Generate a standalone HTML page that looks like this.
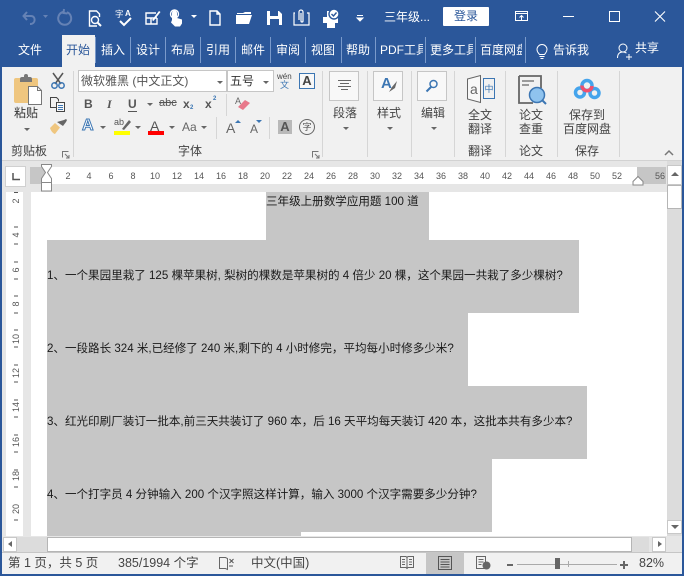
<!DOCTYPE html>
<html><head><meta charset="utf-8">
<style>
html,body{margin:0;padding:0}
body{width:684px;height:576px;overflow:hidden;position:relative;background:#e6e6e6;font-family:"Liberation Sans","Noto Sans CJK SC",sans-serif;font-size:12px;color:#333}
.a{position:absolute;white-space:nowrap;line-height:1}
.r{position:absolute}
svg{position:absolute;overflow:visible}
.tab{position:absolute;top:43px;color:#fff;font-size:12px;line-height:14px;white-space:nowrap;overflow:hidden;height:16px}
.sep{position:absolute;top:37px;height:26px;width:1px;background:#7a9acb}
.gs{position:absolute;top:71px;height:86px;width:1px;background:#d6d6d6}
.bx{position:absolute;top:71px;width:30px;height:30px;background:#f8f8f8;border:1px solid #c6c6c6;box-sizing:border-box}
.t{position:absolute;font-size:12px;line-height:14px;color:#444;white-space:nowrap;text-align:center}
.tri{position:absolute;width:0;height:0;border-left:3px solid transparent;border-right:3px solid transparent;border-top:3px solid #666}
.rn{position:absolute;top:171px;font-size:9px;line-height:10px;width:20px;text-align:center;color:#555}
.vn{position:absolute;left:11px;width:10px;font-size:9px;line-height:10px;color:#555;transform:rotate(-90deg);text-align:center}
.doc{position:absolute;font-size:11.55px;line-height:14px;color:#1a1a1a;white-space:nowrap}
.st{position:absolute;top:556px;font-size:12.5px;line-height:14px;color:#444;white-space:nowrap}
</style></head><body>
<!-- title bar -->
<div class="r" style="left:0;top:0;width:684px;height:67px;background:#2b579a"></div>

<svg style="left:0;top:0" width="342" height="34" fill="none" stroke="#fff" stroke-width="1.4">
<g stroke="#6582b5" stroke-width="2"><path d="M27 12l-3.500 4 3.500 4M24 16h7c5 0 5 8-1 8"/></g>
<path d="M43 15l2.500 3 2.500-3z" fill="#6582b5" stroke="none"/>
<g stroke="#6582b5" stroke-width="2"><path d="M63 12a6.500 6.500 0 1 0 4 .2M64 9l-.5 4 4 .5"/></g>
<path d="M97 26h-7.500v-15h7l3 3v3" />
<circle cx="95" cy="20" r="3.500"/><path d="M97.500 22.500l3.500 3.500" stroke-width="2"/>
<text x="115" y="17" font-size="8.500" fill="#fff" stroke="none" font-family="Liberation Sans,Noto Sans CJK SC,sans-serif">字</text>
<text x="125" y="16" font-size="8" fill="#fff" stroke="none" font-family="Liberation Sans,sans-serif" font-weight="bold">A</text>
<path d="M120 21l4 4 7-7" stroke-width="2"/>
<path d="M156 13h-10v11h11v-6M146 18h11M151 18v6" />
<path d="M152 20l7-9 1.500 1-7 9z" fill="#fff" stroke="none"/>
<path d="M172 20v-7a2.500 2.500 0 0 1 5 0v5l5 1.500v4l-2 3h-5l-4-4z" fill="#fff" stroke="none"/>
<circle cx="174.500" cy="14" r="4"/>
<path d="M191 15l3 3 3-3z" fill="#fff" stroke="none"/>
<path d="M210 11h7l3 3v11h-10zM217 11v3h3"/>
<path d="M236 15v9h13l3-9z" fill="#fff" stroke="none"/><path d="M237 13h6l2-1h6v2h-14z" fill="#fff" stroke="none"/>
<path d="M267 11h12l3 3v11h-15z" fill="#fff" stroke="none"/><rect x="270" y="11" width="8" height="5" fill="#2b579a" stroke="none"/><rect x="270" y="19" width="9" height="6" fill="#2b579a" stroke="none"/>
<path d="M295 13h-1v12h15v-12h-2" stroke-width="1.200"/><path d="M299 20v-8a2 2 0 0 1 4 0v9a1 1 0 0 1-2 0v-8" stroke-width="1.200"/>
<rect x="323" y="17" width="15" height="6" fill="#fff" stroke="none"/><rect x="327" y="23" width="8" height="5" fill="#fff" stroke="none"/><rect x="327" y="11" width="8" height="6" fill="#fff" stroke="none"/>
<circle cx="334" cy="14" r="5" fill="#fff" stroke="#2b579a"/><path d="M331.500 14l2 2 3-3.500" stroke="#2b579a"/>
</svg>
<svg style="left:342px;top:0" width="342" height="34" fill="none" stroke="#fff">
<path d="M15 15.500h6M15 18l3 3 3-3z" fill="#fff" stroke-width="1"/>
<rect x="173.500" y="11.500" width="12" height="9"/><path d="M173.500 13.500h12M179.500 20v-4M177.500 17.500l2-2 2 2"/>
<path d="M221 16.500h11"/>
<rect x="267.500" y="11.500" width="10" height="10" />
<path d="M313 11.500l10 10M323 11.500l-10 10" stroke-width="1.100"/>
</svg>
<div class="a" style="left:384px;top:10px;color:#fff;font-size:12px;line-height:14px">三年级...</div>
<div class="r" style="left:443px;top:7px;width:46px;height:19px;background:#fff;border-radius:1px"></div>
<div class="a" style="left:454px;top:9px;color:#2b579a;font-size:12px;line-height:14px">登录</div>

<!-- tabs -->
<div class="r" style="left:62px;top:35px;width:33px;height:32px;background:#f1f1f1"></div>
<div class="tab" style="left:18px">文件</div>
<div class="tab" style="left:66px;color:#2b579a">开始</div>
<div class="tab" style="left:101px">插入</div>
<div class="tab" style="left:136px">设计</div>
<div class="tab" style="left:171px">布局</div>
<div class="tab" style="left:206px">引用</div>
<div class="tab" style="left:241px">邮件</div>
<div class="tab" style="left:276px">审阅</div>
<div class="tab" style="left:311px">视图</div>
<div class="tab" style="left:346px">帮助</div>
<div class="tab" style="left:380px;width:43px">PDF工具集</div>
<div class="tab" style="left:430px;width:43px">更多工具</div>
<div class="tab" style="left:480px;width:42px">百度网盘</div>
<div class="sep" style="left:95px"></div><div class="sep" style="left:130px"></div><div class="sep" style="left:165px"></div><div class="sep" style="left:200px"></div><div class="sep" style="left:235px"></div><div class="sep" style="left:270px"></div><div class="sep" style="left:305px"></div><div class="sep" style="left:341px"></div><div class="sep" style="left:375px"></div><div class="sep" style="left:425px"></div><div class="sep" style="left:475px"></div><div class="sep" style="left:525px"></div>
<svg style="left:535px;top:43px" width="16" height="18" fill="none" stroke="#fff"><path d="M4.500 11.500c-1-1.500-2.500-2.500-2.500-5a5 5 0 0 1 10 0c0 2.500-1.500 3.500-2.500 5zM4.500 13.500h5M5.500 15.500h3"/></svg>
<div class="tab" style="left:553px">告诉我</div>
<svg style="left:616px;top:42px" width="18" height="18" fill="none" stroke="#fff"><circle cx="7" cy="6" r="4"/><path d="M1.500 16c0-4 2-6 5.500-6 1.500 0 2.500.5 3.500 1M10 15h6M13 12v6"/></svg>
<div class="tab" style="left:635px;top:41px">共享</div>

<!-- ribbon -->
<div class="r" style="left:2px;top:67px;width:680px;height:93px;background:#f1f1f1"></div>
<div class="r" style="left:0;top:66px;width:2px;height:510px;background:#2b579a"></div>
<div class="r" style="left:682px;top:66px;width:2px;height:510px;background:#2b579a"></div>
<div class="r" style="left:2px;top:160px;width:680px;height:1px;background:#d2d2d2"></div>
<div class="gs" style="left:73px"></div><div class="gs" style="left:322px"></div><div class="gs" style="left:367px"></div><div class="gs" style="left:411px"></div><div class="gs" style="left:454px"></div><div class="gs" style="left:505px"></div><div class="gs" style="left:557px"></div><div class="gs" style="left:619px"></div>

<!-- clipboard -->
<svg style="left:0;top:66px" width="72" height="70" fill="none">
<rect x="14" y="12" width="24" height="25" rx="2" fill="#efc67f"/>
<path d="M20 16v-3a2 2 0 0 1 2-2h2v-1a2 2 0 0 1 4 0v1h2a2 2 0 0 1 2 2v3z" fill="#777"/>
<path d="M28.500 20.500h9l4 4v14h-13z" fill="#fff" stroke="#777"/><path d="M37.500 20.500v4h4" stroke="#777"/>
<g stroke="#3c76b3" stroke-width="1.500"><path d="M53 7l8 11" stroke="#555"/><path d="M63 7l-8 11" stroke="#555"/><circle cx="54.500" cy="19.500" r="2.700"/><circle cx="61.500" cy="19.500" r="2.700"/></g>
<path d="M57 41.500h-6.500v-10h6l2 2v2" stroke="#444"/><rect x="56.500" y="36.500" width="8" height="9" fill="#f8f8f8" stroke="#444"/><path d="M58 39.500h5M58 41.500h5M58 43.500h5" stroke="#3c76b3"/>
<path d="M50 62l5-5 5 4.500-5 6.500c-2-.5-4-3-5-6z" fill="#efc67f"/><path d="M57 56l7-2 2-1 1 1-1 2-3 4z" fill="#666"/>
</svg>
<div class="t" style="left:14px;top:106px;color:#333">粘贴</div>
<div class="tri" style="left:24px;top:128px"></div>
<div class="t" style="left:11px;top:144px;color:#444">剪贴板</div>
<svg style="left:61px;top:150px" width="10" height="9" fill="none" stroke="#777"><path d="M1.500 7.500v-6h6M4 4l4 4M8 5v3h-3"/></svg>

<!-- font -->
<div class="r" style="left:78px;top:70px;width:149px;height:22px;background:#fff;border:1px solid #c6c6c6;box-sizing:border-box"></div>
<div class="a" style="left:81px;top:74px;font-size:12px;line-height:14px;color:#555">微软雅黑 (中文正文)</div>
<div class="tri" style="left:217px;top:81px"></div>
<div class="r" style="left:227px;top:70px;width:47px;height:22px;background:#fff;border:1px solid #c6c6c6;box-sizing:border-box"></div>
<div class="a" style="left:230px;top:74px;font-size:12px;line-height:14px;color:#333">五号</div>
<div class="tri" style="left:263px;top:81px"></div>
<div class="a" style="left:277px;top:73px;font-size:8px;color:#444">wén</div>
<div class="a" style="left:280px;top:81px;font-size:9px;color:#3c76b3">文</div>
<div class="r" style="left:299px;top:73px;width:16px;height:16px;border:1px solid #3c76b3;box-sizing:border-box;background:#f8f8f8;font-size:13px;line-height:14px;text-align:center;color:#444;font-weight:bold">A</div>

<div class="a" style="left:84px;top:98px;font-size:12px;font-weight:bold;color:#555">B</div>
<div class="a" style="left:107px;top:98px;font-size:12px;font-style:italic;font-family:'Liberation Serif',serif;color:#555;font-weight:bold">I</div>
<div class="a" style="left:128px;top:98px;font-size:12px;font-weight:bold;color:#555;border-bottom:1px solid #555;padding-bottom:1px">U</div>
<div class="tri" style="left:147px;top:103px"></div>
<div class="a" style="left:159px;top:98px;font-size:11px;color:#555;text-decoration:line-through">abc</div>
<div class="a" style="left:183px;top:98px;font-size:12px;font-weight:bold;color:#555">x</div><div class="a" style="left:190px;top:105px;font-size:6px;color:#3c76b3;font-weight:bold">2</div>
<div class="a" style="left:205px;top:98px;font-size:12px;font-weight:bold;color:#555">x</div><div class="a" style="left:213px;top:96px;font-size:6px;color:#3c76b3;font-weight:bold">2</div>
<div class="r" style="left:226px;top:94px;width:1px;height:22px;background:#d6d6d6"></div>
<svg style="left:234px;top:95px" width="18" height="18"><text x="1" y="9" font-size="9" fill="#666" font-family="Liberation Sans,sans-serif">A</text><path d="M4 12l7-7 5 3-7 7z" fill="#e8798b"/></svg>

<div class="a" style="left:82px;top:118px;font-size:16px;font-weight:bold;color:#fff;-webkit-text-stroke:1px #3c76b3">A</div>
<div class="tri" style="left:100px;top:126px"></div>
<div class="a" style="left:114px;top:118px;font-size:9px;color:#555">ab</div>
<svg style="left:120px;top:119px" width="12" height="12"><path d="M2 10l7-9 2 2-7 8z" fill="#666"/></svg>
<div class="r" style="left:114px;top:131px;width:16px;height:4px;background:#ff0"></div>
<div class="tri" style="left:135px;top:126px"></div>
<div class="a" style="left:150px;top:119px;font-size:14px;color:#555">A</div>
<div class="r" style="left:148px;top:131px;width:16px;height:4px;background:#f00"></div>
<div class="tri" style="left:169px;top:126px"></div>
<div class="a" style="left:182px;top:121px;font-size:12px;color:#666">Aa</div>
<div class="tri" style="left:201px;top:126px"></div>
<div class="r" style="left:216px;top:117px;width:1px;height:22px;background:#d6d6d6"></div>
<div class="a" style="left:226px;top:121px;font-size:14px;color:#666">A</div>
<div class="r" style="left:235px;top:120px;width:0;height:0;border-left:3px solid transparent;border-right:3px solid transparent;border-bottom:3px solid #3c76b3"></div>
<div class="a" style="left:250px;top:123px;font-size:12px;color:#666">A</div>
<div class="r" style="left:256px;top:120px;width:0;height:0;border-left:3px solid transparent;border-right:3px solid transparent;border-top:3px solid #3c76b3"></div>
<div class="r" style="left:269px;top:117px;width:1px;height:22px;background:#d6d6d6"></div>
<div class="r" style="left:278px;top:120px;width:14px;height:14px;background:#b9b9b9;font-size:13px;line-height:14px;text-align:center;font-weight:bold;color:#555">A</div>
<div class="r" style="left:299px;top:119px;width:16px;height:16px;border:1px solid #666;border-radius:50%;box-sizing:border-box;font-size:9px;line-height:14px;text-align:center;color:#555">字</div>
<div class="t" style="left:178px;top:144px">字体</div>
<svg style="left:311px;top:150px" width="10" height="9" fill="none" stroke="#777"><path d="M1.500 7.500v-6h6M4 4l4 4M8 5v3h-3"/></svg>

<!-- para/style/edit -->
<div class="bx" style="left:329px"></div>
<svg style="left:338px;top:80px" width="14" height="12" stroke="#666"><path d="M0 .5h13M2 3.500h9M0 6.500h13M3 9.500h7"/></svg>
<div class="t" style="left:333px;top:106px">段落</div><div class="tri" style="left:343px;top:127px"></div>
<div class="bx" style="left:373px"></div>
<div class="a" style="left:381px;top:76px;font-size:15px;font-weight:bold;color:#3c76b3">A</div>
<svg style="left:388px;top:80px" width="10" height="14"><path d="M1 12l3-5 5-6-2 7z" fill="#666"/></svg>
<div class="t" style="left:377px;top:106px">样式</div><div class="tri" style="left:387px;top:127px"></div>
<div class="bx" style="left:417px"></div>
<svg style="left:425px;top:79px" width="14" height="14" fill="none" stroke="#3c76b3" stroke-width="1.500"><circle cx="8.500" cy="5" r="3.500"/><path d="M6 8l-4.500 4.500" stroke-width="2"/></svg>
<div class="t" style="left:421px;top:106px">编辑</div><div class="tri" style="left:431px;top:127px"></div>

<!-- translate -->
<svg style="left:465px;top:74px" width="32" height="30" fill="none"><path d="M2.500 5l13-3.500v27l-13-3.500z" fill="#f8f8f8" stroke="#666"/><text x="5" y="20" font-size="14" fill="#666" stroke="none" font-family="Liberation Sans,sans-serif">a</text><rect x="18.500" y="4.500" width="11" height="20" stroke="#3c76b3"/><text x="19.500" y="18" font-size="9" fill="#3c76b3" stroke="none" font-family="Noto Sans CJK SC,sans-serif">中</text></svg>
<div class="t" style="left:468px;top:108px">全文</div><div class="t" style="left:468px;top:122px">翻译</div><div class="t" style="left:468px;top:144px">翻译</div>
<!-- paper -->
<svg style="left:517px;top:75px" width="30" height="32" fill="none"><path d="M2 1h22v12M2 1v27h14" stroke="#666" stroke-width="1.800"/><path d="M5 6h12M5 10h7" stroke="#666" stroke-width="1.300"/><circle cx="20" cy="20" r="7.500" fill="#8fc3ee" stroke="#3c76b3" stroke-width="1.500"/><path d="M25.500 25.500l3.500 3.500" stroke="#3c76b3" stroke-width="2"/></svg>
<div class="t" style="left:519px;top:108px">论文</div><div class="t" style="left:519px;top:122px">查重</div><div class="t" style="left:519px;top:144px">论文</div>
<!-- baidu -->
<svg style="left:574px;top:78px" width="28" height="24" fill="none" stroke-width="3.500"><circle cx="13" cy="7.500" r="5" stroke="#45a4ec"/><circle cx="6" cy="14.500" r="4.500" stroke="#45a4ec"/><circle cx="20.500" cy="15" r="4.500" stroke="#45a4ec"/><path d="M8 7.500a5 5 0 0 0 10 .5" stroke="#f0506e"/></svg>
<div class="t" style="left:569px;top:108px">保存到</div><div class="t" style="left:563px;top:122px">百度网盘</div><div class="t" style="left:575px;top:144px">保存</div>
<svg style="left:664px;top:150px" width="10" height="7" fill="none" stroke="#777" stroke-width="1.500"><path d="M1 5l4-4 4 4"/></svg>

<!-- ruler row -->
<div class="r" style="left:2px;top:161px;width:680px;height:31px;background:#e6e6e6"></div>
<div class="r" style="left:5px;top:166px;width:21px;height:21px;background:#fff;border:1px solid #d0d0d0;box-sizing:border-box"></div>
<svg style="left:12px;top:173px" width="8" height="8" fill="none" stroke="#555" stroke-width="1.500"><path d="M1 0v6.500h7"/></svg>
<div class="r" style="left:30px;top:167px;width:636px;height:17px;background:#fff"></div>
<div class="r" style="left:30px;top:167px;width:17px;height:17px;background:#c6c6c6"></div>
<div class="r" style="left:637px;top:167px;width:29px;height:17px;background:#c6c6c6"></div>
<div class="rn" style="left:58px">2</div><div class="rn" style="left:79px">4</div><div class="rn" style="left:101px">6</div><div class="rn" style="left:123px">8</div><div class="rn" style="left:145px">10</div><div class="rn" style="left:167px">12</div><div class="rn" style="left:189px">14</div><div class="rn" style="left:211px">16</div><div class="rn" style="left:233px">18</div><div class="rn" style="left:255px">20</div><div class="rn" style="left:277px">22</div><div class="rn" style="left:299px">24</div><div class="rn" style="left:321px">26</div><div class="rn" style="left:343px">28</div><div class="rn" style="left:365px">30</div><div class="rn" style="left:387px">32</div><div class="rn" style="left:409px">34</div><div class="rn" style="left:431px">36</div><div class="rn" style="left:453px">38</div><div class="rn" style="left:475px">40</div><div class="rn" style="left:497px">42</div><div class="rn" style="left:519px">44</div><div class="rn" style="left:541px">46</div><div class="rn" style="left:563px">48</div><div class="rn" style="left:585px">50</div><div class="rn" style="left:607px">52</div><div class="rn" style="left:650px">56</div>
<svg style="left:41px;top:164px" width="12" height="29" fill="#fff" stroke="#888"><path d="M.5.500h10v2l-4 6 4 6v4h-10v-4l4-6-4-6zM.5 18.500h10v8.500h-10z"/></svg>
<svg style="left:632px;top:176px" width="12" height="10" fill="#fff" stroke="#888"><path d="M6 .5l5 5v3.500h-10v-3.500z"/></svg>

<!-- vertical ruler -->
<div class="r" style="left:6px;top:192px;width:17px;height:344px;background:#fff"></div>
<div class="vn" style="top:196px">2</div><div class="vn" style="top:230px">4</div><div class="vn" style="top:265px">6</div><div class="vn" style="top:299px">8</div><div class="vn" style="top:334px">10</div><div class="vn" style="top:368px">12</div><div class="vn" style="top:402px">14</div><div class="vn" style="top:437px">16</div><div class="vn" style="top:471px">18</div><div class="vn" style="top:504px">20</div>
<svg style="left:14px;top:192px" width="5" height="344" stroke="#555"><path d="M0 .5h4M0 35h4M0 52h4M0 70h4M0 87h4M0 104h4M0 121h4M0 138h4M0 155h4M0 173h4M0 190h4M0 208h4M0 225h4M0 243h4M0 260h4M0 278h4M0 295h4M0 328h4"/></svg>

<!-- document -->
<div class="r" style="left:31px;top:192px;width:636px;height:344px;background:#fff"></div>
<div class="r" style="left:266px;top:192px;width:163px;height:48px;background:#c6c6c6"></div>
<div class="r" style="left:47px;top:240px;width:532px;height:73px;background:#c6c6c6"></div>
<div class="r" style="left:47px;top:313px;width:421px;height:73px;background:#c6c6c6"></div>
<div class="r" style="left:47px;top:386px;width:540px;height:73px;background:#c6c6c6"></div>
<div class="r" style="left:47px;top:459px;width:445px;height:73px;background:#c6c6c6"></div>
<div class="r" style="left:47px;top:532px;width:254px;height:4px;background:#c6c6c6"></div>
<div class="doc" style="left:266px;top:195px">三年级上册数学应用题 100 道</div>
<div class="doc" style="left:47px;top:269px">1、一个果园里栽了 125 棵苹果树, 梨树的棵数是苹果树的 4 倍少 20 棵，这个果园一共栽了多少棵树?</div>
<div class="doc" style="left:47px;top:342px">2、一段路长 324 米,已经修了 240 米,剩下的 4 小时修完，平均每小时修多少米?</div>
<div class="doc" style="left:47px;top:415px">3、红光印刷厂装订一批本,前三天共装订了 960 本，后 16 天平均每天装订 420 本，这批本共有多少本?</div>
<div class="doc" style="left:47px;top:488px">4、一个打字员 4 分钟输入 200 个汉字照这样计算，输入 3000 个汉字需要多少分钟?</div>

<!-- vertical scrollbar -->
<div class="r" style="left:667px;top:161px;width:15px;height:391px;background:#dcdcdc"></div>
<div class="r" style="left:667px;top:185px;width:15px;height:24px;background:#fff;border:1px solid #b5b5b5;box-sizing:border-box"></div>
<div class="r" style="left:667px;top:165px;width:15px;height:20px;background:#fff;border:1px solid #c8c8c8;box-sizing:border-box"></div>
<div class="r" style="left:671px;top:172px;width:0;height:0;border-left:4px solid transparent;border-right:4px solid transparent;border-bottom:4px solid #666"></div>
<div class="r" style="left:667px;top:520px;width:15px;height:14px;background:#fff;border:1px solid #c8c8c8;box-sizing:border-box"></div>
<div class="r" style="left:671px;top:525px;width:0;height:0;border-left:4px solid transparent;border-right:4px solid transparent;border-top:4px solid #666"></div>

<!-- h scrollbar -->
<div class="r" style="left:2px;top:536px;width:680px;height:16px;background:#e6e6e6"></div>
<div class="r" style="left:3px;top:537px;width:14px;height:15px;background:#fff;border:1px solid #c8c8c8;box-sizing:border-box"></div>
<div class="r" style="left:8px;top:541px;width:0;height:0;border-top:3.500px solid transparent;border-bottom:3.500px solid transparent;border-right:4px solid #666"></div>
<div class="r" style="left:17px;top:537px;width:30px;height:15px;background:#dcdcdc"></div>
<div class="r" style="left:47px;top:537px;width:585px;height:15px;background:#fff;border:1px solid #b5b5b5;box-sizing:border-box"></div>
<div class="r" style="left:632px;top:537px;width:17px;height:15px;background:#dcdcdc"></div>
<div class="r" style="left:652px;top:537px;width:14px;height:15px;background:#fff;border:1px solid #c8c8c8;box-sizing:border-box"></div>
<div class="r" style="left:658px;top:541px;width:0;height:0;border-top:3.500px solid transparent;border-bottom:3.500px solid transparent;border-left:4px solid #666"></div>

<!-- status bar -->
<div class="r" style="left:2px;top:552px;width:680px;height:22px;background:#f1f1f1;border-top:1px solid #c6c6c6;box-sizing:border-box"></div>
<div class="r" style="left:0;top:574px;width:684px;height:2px;background:#2b579a"></div>
<div class="st" style="left:8px">第 1 页，共 5 页</div>
<div class="st" style="left:118px">385/1994 个字</div>
<svg style="left:219px;top:556px" width="16" height="15" fill="none" stroke="#666"><path d="M.5 1.500h6l2 1v11l-2-1h-6zM8.500 2.500v11"/><path d="M10.500 3l4 4M14.500 3l-4 4M10 10h4" stroke="#555"/></svg>
<div class="st" style="left:251px">中文(中国)</div>
<svg style="left:400px;top:556px" width="14" height="13" fill="none" stroke="#666"><path d="M.5.500h5.500l1 1 1-1h5.500v11h-5.500l-1 1-1-1h-5.500zM7 1.500v10M2 3.500h3M2 6h3M2 8.500h3M9 3.500h3M9 6h3M9 8.500h3"/></svg>
<div class="r" style="left:426px;top:553px;width:38px;height:21px;background:#c6c6c6"></div>
<svg style="left:438px;top:556px" width="14" height="14" fill="none" stroke="#555"><rect x=".5" y=".5" width="13" height="13"/><path d="M2.500 3.500h9M2.500 6h9M2.500 8.500h9M2.500 11h9"/></svg>
<svg style="left:476px;top:556px" width="15" height="14" fill="none" stroke="#666"><path d="M.5.500h9v12h-9zM2.500 3.500h5M2.500 6h5M2.500 8.500h3"/><circle cx="10.500" cy="9.500" r="4" fill="#666" stroke="none"/></svg>
<div class="r" style="left:507px;top:564px;width:6px;height:2px;background:#666"></div>
<div class="r" style="left:517px;top:564px;width:100px;height:1px;background:#aaa"></div>
<div class="r" style="left:568px;top:561px;width:1px;height:6px;background:#aaa"></div>
<div class="r" style="left:555px;top:558px;width:5px;height:11px;background:#666"></div>
<div class="r" style="left:620px;top:564px;width:8px;height:2px;background:#666"></div>
<div class="r" style="left:623px;top:561px;width:2px;height:8px;background:#666"></div>
<div class="st" style="left:639px">82%</div>
</body></html>
